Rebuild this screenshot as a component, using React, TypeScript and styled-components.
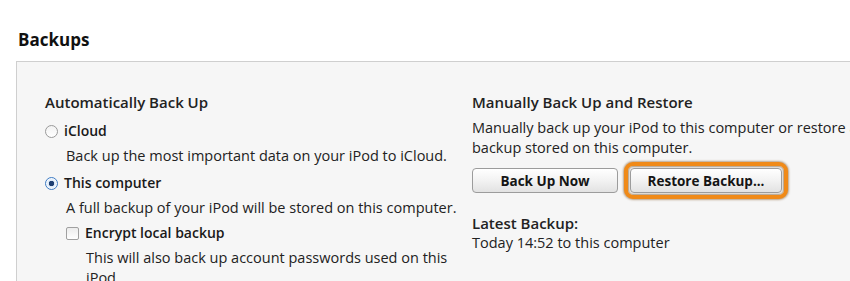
import React from "react";
import styled, { createGlobalStyle } from "styled-components";

const Global = createGlobalStyle`
  html, body {
    margin: 0;
    background: #ffffff;
    overflow: hidden;
  }
  body {
    font-family: "Open Sans", "Noto Sans", sans-serif;
    color: #1c1c1c;
  }
`;

const Page = styled.div`
  width: 850px;
  height: 281px;
  overflow: hidden;
  padding: 30px 0 0 18px;
  box-sizing: border-box;
`;

const Title = styled.h1`
  margin: 0;
  font-size: 17px;
  line-height: 20px;
  font-weight: 700;
  color: #111;
`;

const Panel = styled.div`
  margin: 11px 0 0 -2px;
  width: 900px;
  height: 260px;
  border: 1px solid #cfcfcf;
  background: #f6f6f6;
  padding: 30px 0 0 28px;
  box-sizing: border-box;
  display: grid;
  grid-template-columns: 427px 1fr;
`;

const Column = styled.div`
  display: flex;
  flex-direction: column;
`;

const Heading = styled.h2<{ $mt?: number }>`
  margin: ${p => p.$mt ?? 0}px 0 0;
  font-size: 15px;
  line-height: 20px;
  font-weight: 600;
  color: #222;
`;

const Text = styled.p<{ $mt?: number; $indent?: number }>`
  margin: ${p => p.$mt ?? 0}px 0 0 ${p => p.$indent ?? 0}px;
  font-size: 14.5px;
  line-height: 20px;
  white-space: nowrap;
  color: #222;
`;

const Option = styled.label<{ $mt: number; $indent?: number }>`
  display: flex;
  align-items: center;
  gap: 6px;
  margin: ${p => p.$mt}px 0 0 ${p => p.$indent ?? 0}px;
  font-size: 14px;
  line-height: 20px;
  font-weight: 600;
  color: #1a1a1a;
`;

const Radio = styled.span<{ $checked?: boolean }>`
  width: 13px;
  height: 13px;
  border-radius: 50%;
  box-sizing: border-box;
  border: 1px solid ${p => (p.$checked ? "#3d7bc4" : "#9a9a9a")};
  background: ${p =>
    p.$checked
      ? "radial-gradient(circle, #1d3f73 0 2.5px, #dbe9f8 3px, #ffffff 6px)"
      : "linear-gradient(#f2f2f2, #ffffff)"};
`;

const Check = styled.span`
  width: 13px;
  height: 13px;
  border-radius: 2px;
  box-sizing: border-box;
  border: 1px solid #a0a0a0;
  background: linear-gradient(#ececec, #ffffff);
`;

const ButtonRow = styled.div`
  display: flex;
  align-items: center;
  gap: 6px;
  margin-top: 4px;
`;

const Button = styled.button<{ $w: number }>`
  width: ${p => p.$w}px;
  height: 25px;
  padding: 0;
  border: 1px solid #9c9c9c;
  border-radius: 4px;
  background: linear-gradient(#ffffff, #f1f1f1 55%, #e2e2e2);
  font-family: inherit;
  font-size: 13.5px;
  font-weight: 700;
  color: #151515;
  box-shadow: inset 0 1px 0 #fff;
`;

const Highlight = styled.span`
  display: inline-flex;
  padding: 2px;
  border: 4px solid #f08a18;
  border-radius: 9px;
  box-shadow: 0 0 2px 1px rgba(110, 60, 0, 0.45), inset 0 0 2px 1px rgba(90, 50, 0, 0.5);
  background: #f6f6f6;
`;

export default function App() {
  return (
    <Page>
      <Global />
      <Title>Backups</Title>
      <Panel>
        <Column>
          <Heading>Automatically Back Up</Heading>
          <Option $mt={9}>
            <Radio />
            iCloud
          </Option>
          <Text $mt={5} $indent={21}>
            Back up the most important data on your iPod to iCloud.
          </Text>
          <Option $mt={7}>
            <Radio $checked />
            This computer
          </Option>
          <Text $mt={5} $indent={21}>
            A full backup of your iPod will be stored on this computer.
          </Text>
          <Option $mt={5} $indent={21}>
            <Check />
            Encrypt local backup
          </Option>
          <Text $mt={5} $indent={41}>
            This will also back up account passwords used on this
            <br />
            iPod.
          </Text>
        </Column>
        <Column>
          <Heading>Manually Back Up and Restore</Heading>
          <Text $mt={6}>
            Manually back up your iPod to this computer or restore a
            <br />
            backup stored on this computer.
          </Text>
          <ButtonRow>
            <Button $w={146}>Back Up Now</Button>
            <Highlight>
              <Button $w={152}>Restore Backup...</Button>
            </Highlight>
          </ButtonRow>
          <Heading $mt={14}>Latest Backup:</Heading>
          <Text>Today 14:52 to this computer</Text>
        </Column>
      </Panel>
    </Page>
  );
}
